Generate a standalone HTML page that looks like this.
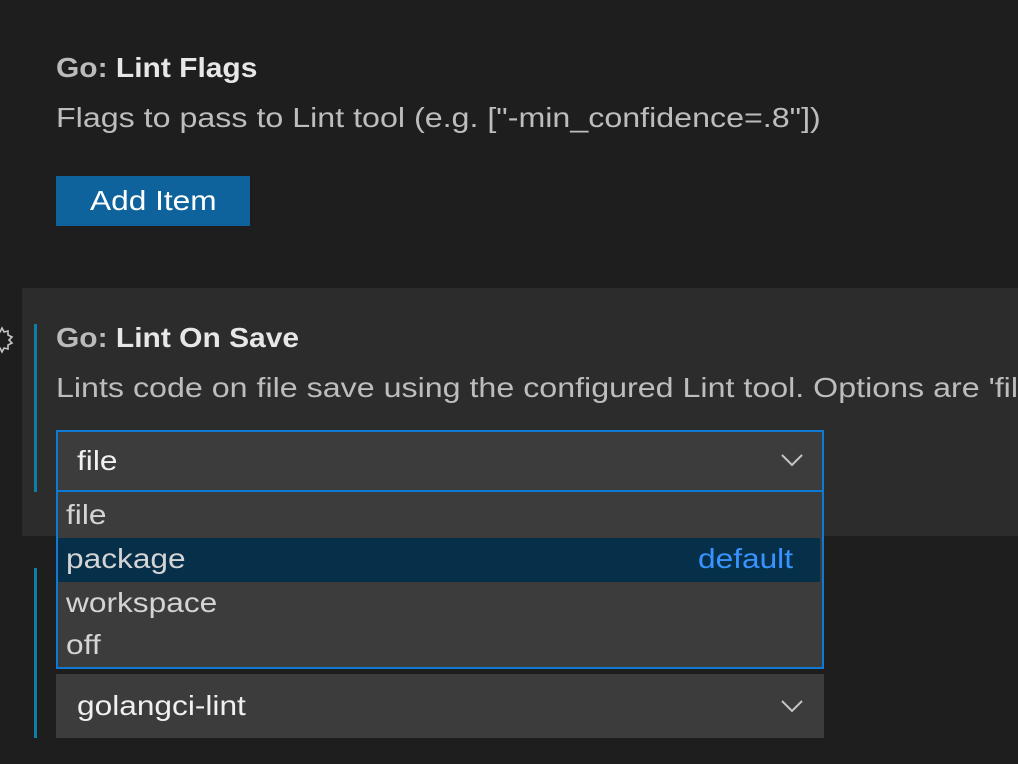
<!DOCTYPE html>
<html><head><style>
*{margin:0;padding:0;box-sizing:border-box}
body{width:1018px;height:764px;background:#1e1e1e;overflow:hidden;position:relative;font-family:"Liberation Sans",sans-serif;}
.a{position:absolute;white-space:nowrap;transform-origin:0 0}
.t{font-size:28px;font-weight:bold;color:#e7e7e7;transform:scaleX(1.07)}
.t span{color:#bbbbbb}
.d{font-size:28px;color:#bdbdbd;transform:scaleX(1.15)}
.opt{font-size:28px;color:#d4d4d4;transform:scaleX(1.13)}
</style></head><body>
<div class="a t" style="left:56px;top:52px">
<span>Go:</span> Lint Flags</div>
<div class="a d" style="left:56px;top:102px">Flags to pass to Lint tool (e.g. ["-min_confidence=.8"])</div>
<div class="a" style="left:56px;top:176px;width:194px;height:50px;background:#0e639c"></div>
<div class="a opt" style="left:90px;top:185px;color:#fff">Add Item</div>

<div class="a" style="left:22px;top:288px;width:996px;height:248px;background:#2c2c2c"></div>
<div class="a" style="left:34px;top:324px;width:3px;height:168px;background:#0d7ea6"></div>
<div class="a" style="left:34px;top:568px;width:3px;height:170px;background:#0d7ea6"></div>
<svg class="a" style="left:-10px;top:326px" width="24" height="28" viewBox="0 0 24 28"><path d="M12 2l2 4 4-1 0 4 4 2-3 3 3 3-4 2 0 4-4-1-2 4-2-4-4 1 0-4-4-2 3-3-3-3 4-2 0-4 4 1z" fill="none" stroke="#c5c5c5" stroke-width="1.6"/></svg>
<div class="a t" style="left:56px;top:322px"><span>Go:</span> Lint On Save</div>
<div class="a d" style="left:56px;top:372px">Lints code on file save using the configured Lint tool. Options are 'file</div>

<div class="a" style="left:56px;top:430px;width:768px;height:62px;background:#3c3c3c;border:2px solid #0e7ad3"></div>
<div class="a opt" style="left:77px;top:445px;color:#f0f0f0">file</div>
<svg class="a" style="left:780px;top:453px" width="24" height="14" viewBox="0 0 24 14"><path d="M2 2l10 10 10-10" fill="none" stroke="#c5c5c5" stroke-width="2"/></svg>

<div class="a" style="left:56px;top:492px;width:768px;height:177px;background:#3c3c3c;border:2px solid #0e7ad3;border-top:none"></div>
<div class="a" style="left:58px;top:538px;width:762px;height:44px;background:#062f4a"></div>
<div class="a opt" style="left:66px;top:499px">file</div>
<div class="a opt" style="left:66px;top:543px">package</div>
<div class="a opt" style="left:698px;top:543px;color:#3794ff">default</div>
<div class="a opt" style="left:66px;top:587px">workspace</div>
<div class="a opt" style="left:66px;top:629px">off</div>

<div class="a" style="left:56px;top:674px;width:768px;height:64px;background:#3c3c3c"></div>
<div class="a opt" style="left:77px;top:690px;color:#f0f0f0">golangci-lint</div>
<svg class="a" style="left:780px;top:699px" width="24" height="14" viewBox="0 0 24 14"><path d="M2 2l10 10 10-10" fill="none" stroke="#c5c5c5" stroke-width="2"/></svg>
</body></html>
